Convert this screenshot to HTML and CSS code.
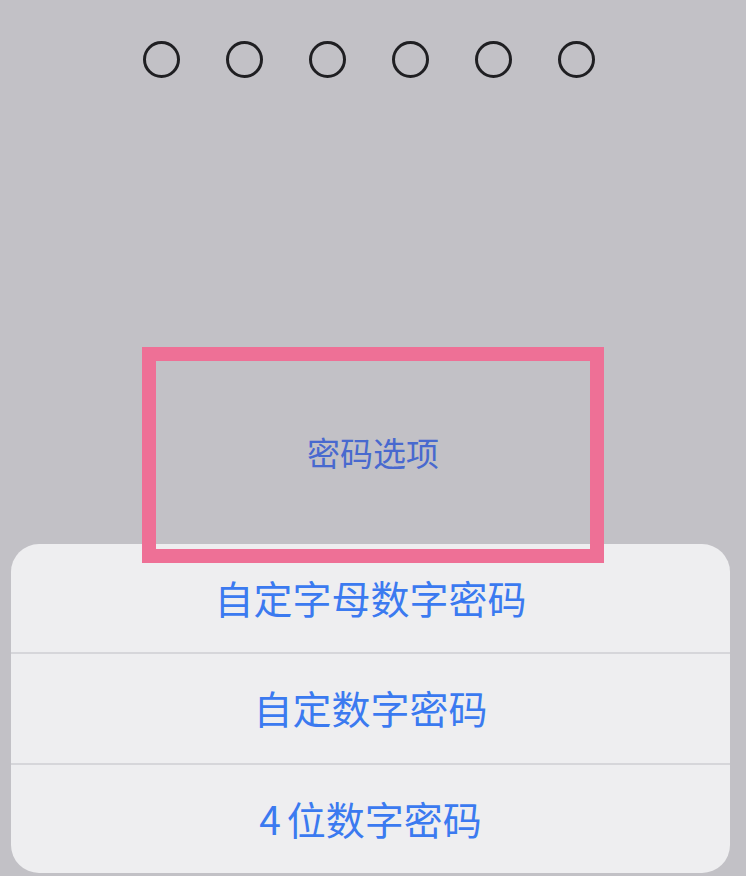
FILE: index.html
```html
<!DOCTYPE html>
<html lang="zh-CN">
<head>
    <meta charset="UTF-8">
    <meta name="viewport" content="width=device-width, initial-scale=1.0">
    <title>密码选项</title>
    <link rel="stylesheet" href="styles.css">
</head>
<body>

<div class="screen">
    <div class="dots">
        <span class="dot"></span>
        <span class="dot"></span>
        <span class="dot"></span>
        <span class="dot"></span>
        <span class="dot"></span>
        <span class="dot"></span>
    </div>

    <div class="highlight">
        <span class="options-link">密码选项</span>
    </div>

    <div class="sheet">
        <div class="sheet-item">自定字母数字密码</div>
        <div class="sheet-item">自定数字密码</div>
        <div class="sheet-item"><span class="digit">4</span>位数字密码</div>
    </div>
</div>

</body>
</html>
```

FILE: styles.css
```css
body {
    margin: 0;
    background-color: #c2c1c6;
    font-family: "Noto Sans CJK SC", "Noto Sans", sans-serif;
}
.screen {
    width: 746px;
    height: 876px;
    display: flex;
    flex-direction: column;
    align-items: center;
    overflow: hidden;
}
.dots {
    display: flex;
    gap: 46px;
    margin-top: 41px;
    padding-right: 8px;
}
.dot {
    width: 37px;
    height: 37px;
    border: 3px solid #1f1f22;
    border-radius: 50%;
    box-sizing: border-box;
}
.highlight {
    position: relative;
    z-index: 2;
    width: 462px;
    height: 216px;
    margin-top: 269px;
    padding-bottom: 6px;
    border: 14px solid #ee7096;
    box-sizing: border-box;
    display: flex;
    justify-content: center;
    align-items: center;
}
.options-link {
    font-size: 33px;
    color: #4869cf;
}
.sheet {
    width: 719px;
    height: 329px;
    margin-top: -19px;
    margin-left: -5px;
    background-color: #eeeef0;
    border-radius: 28px;
    display: flex;
    flex-direction: column;
}
.sheet-item {
    flex: 1;
    display: flex;
    justify-content: center;
    align-items: center;
    padding-bottom: 2px;
    font-size: 39px;
    color: #3b7af0;
    border-top: 2px solid #d6d6da;
}
.sheet-item:first-child {
    border-top: none;
}
.digit {
    margin-right: 6px;
}
```
